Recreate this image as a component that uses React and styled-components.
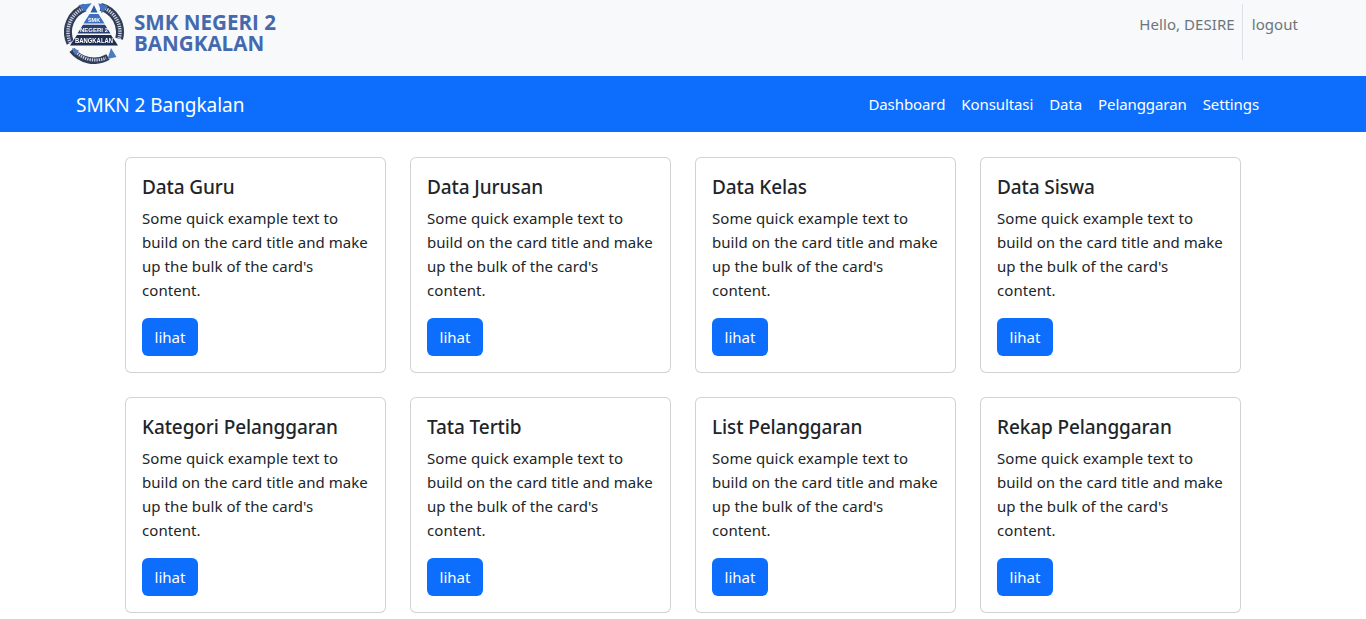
import React from "react";
import styled, { createGlobalStyle } from "styled-components";

const Global = createGlobalStyle`
  html, body { margin: 0; padding: 0; background: #fff; overflow: hidden; }
  body { font-family: "Noto Sans", "Open Sans", sans-serif; font-size: 16px; line-height: 24px; color: #212529; }
  * { box-sizing: border-box; }
`;

const TopBar = styled.header`
  height: 76px; background: #f8f9fa; display: flex; justify-content: space-between; padding: 0 68px 0 64px;
`;
const Brand = styled.div`display: flex; align-items: flex-start; gap: 8px;`;
const BrandName = styled.div`
  font-family: "Open Sans", sans-serif; font-weight: 700; font-size: 20.6px; line-height: 20.5px; color: #4569ae;
  padding-top: 12px; white-space: nowrap;
`;
const UserArea = styled.div`display: flex; align-items: flex-start; padding-top: 4px; font-size: 15px; color: #6c757d;`;
const Hello = styled.span`padding: 8px 7px 0 0; letter-spacing: 0.06px;`;
const Logout = styled.span`border-left: 1px solid #dee2e6; height: 56px; padding: 8px 0 0 9px; letter-spacing: 0.06px;`;
const NavBar = styled.nav`
  height: 56px; background: #0d6efd; display: flex; align-items: center; justify-content: space-between; padding: 0 107px 0 76px; color: #fff;
`;
const NavBrand = styled.div`font-size: 19px; letter-spacing: -0.05px; padding-top: 2px;`;
const NavLinks = styled.div`display: flex; gap: 16px; font-size: 15px; letter-spacing: -0.09px;`;
const Grid = styled.main`
  width: 1140px; margin: 25px auto 0; display: grid; grid-template-columns: repeat(4, 261px); gap: 24px;
  justify-content: space-between; padding: 0 12px;
`;
const Card = styled.section`
  height: 216px; border: 1px solid rgba(0,0,0,.175); border-radius: 6px; padding: 16px; background: #fff;
`;
const Title = styled.h5`
  margin: 1px 0 7px; font-size: 19px; line-height: 24px; font-weight: 500; letter-spacing: -0.1px; white-space: nowrap;
`;
const Body = styled.p`margin: 0 0 16px; font-size: 15px; line-height: 24px; letter-spacing: 0.06px;`;
const Btn = styled.button`
  height: 38px; width: 56px; border: 0; border-radius: 6px; background: #0d6efd; color: #fff; font: inherit; font-size: 15px; display: block; padding: 0;
`;
const LogoSvg = styled.svg`flex: none; filter: blur(0.25px);`;

const Logo = () => (
  <LogoSvg width="62" height="64" viewBox="0 0 62 64">
    <g fill="none" strokeLinecap="butt">
      <path d="M6.4 43 A26 26 0 0 1 21.1 7.6" stroke="#333d58" strokeWidth="8" />
      <path d="M36.7 6.9 A26 26 0 0 1 55.1 38.7" stroke="#333d58" strokeWidth="8" />
      <path d="M8 50 A28 28 0 0 0 44 57" stroke="#333d58" strokeWidth="6.5" />
      <path d="M6.4 43 A26 26 0 0 1 21.1 7.6" stroke="#c8d2e4" strokeWidth="3.5" strokeDasharray="1.3 1" />
      <path d="M36.7 6.9 A26 26 0 0 1 55.1 38.7" stroke="#c8d2e4" strokeWidth="3.5" strokeDasharray="1.3 1" />
      <path d="M10 50 A28 28 0 0 0 42 58" stroke="#c8d2e4" strokeWidth="3" strokeDasharray="1.3 1" />
    </g>
    <path d="M14.3 5 L27.7 3.3 L21 11.7 Z M34.3 3.3 L44 6 L37.7 13.3 Z" fill="#3f73c4" />
    <path d="M47 48 L52.5 57 L43.5 59 Z M8 48 L15 50.5 L11 55 Z" fill="#4a7cc6" />
    <path d="M30 3 L55 47 L5 47 Z" fill="#f8f9fa" />
    <path d="M30 5 L33.5 12.5 H26.5 Z" fill="#2f5ca8" />
    <path d="M25.5 14 H34.5 L40.5 23.5 H19.5 Z" fill="#3b6fc0" />
    <path d="M19 24.8 H41 L46.5 33.5 H13.5 Z" fill="#2a3f72" />
    <path d="M13 35 H47 L54 45.5 H6 Z" fill="#1f2b50" />
    <g fontFamily="Liberation Sans" fontWeight="700" fill="#fff" textAnchor="middle">
      <text x="30" y="21.5" fontSize="5.5">SMK</text>
      <text x="30" y="31.5" fontSize="6" textLength="28" lengthAdjust="spacingAndGlyphs">NEGERI 2</text>
      <text x="30" y="43" fontSize="6.5" textLength="38" lengthAdjust="spacingAndGlyphs">BANGKALAN</text>
    </g>
  </LogoSvg>
);

const titles = ["Data Guru", "Data Jurusan", "Data Kelas", "Data Siswa", "Kategori Pelanggaran", "Tata Tertib", "List Pelanggaran", "Rekap Pelanggaran"];
const links = ["Dashboard", "Konsultasi", "Data", "Pelanggaran", "Settings"];

export default function App() {
  return (
    <>
      <Global />
      <TopBar>
        <Brand>
          <Logo />
          <BrandName>SMK NEGERI 2<br />BANGKALAN</BrandName>
        </Brand>
        <UserArea>
          <Hello>Hello, DESIRE</Hello>
          <Logout>logout</Logout>
        </UserArea>
      </TopBar>
      <NavBar>
        <NavBrand>SMKN 2 Bangkalan</NavBrand>
        <NavLinks>{links.map((l) => <span key={l}>{l}</span>)}</NavLinks>
      </NavBar>
      <Grid>
        {titles.map((t) => (
          <Card key={t}>
            <Title>{t}</Title>
            <Body>Some quick example text to build on the card title and make up the bulk of the card's content.</Body>
            <Btn>lihat</Btn>
          </Card>
        ))}
      </Grid>
    </>
  );
}
